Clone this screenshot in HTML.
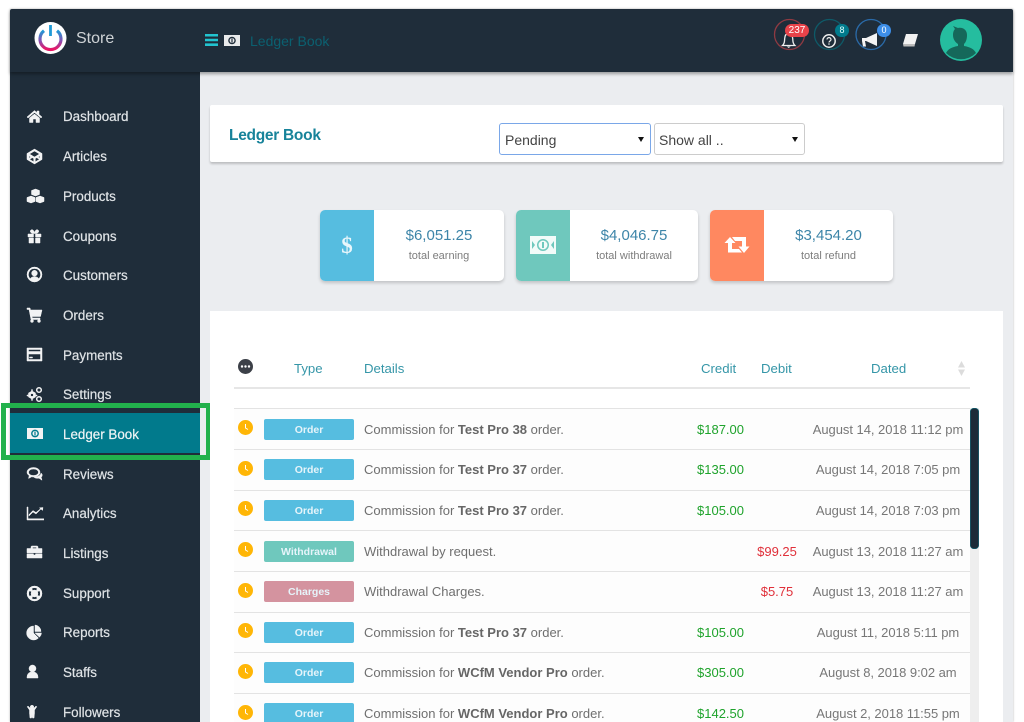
<!DOCTYPE html>
<html><head><meta charset="utf-8"><title>Ledger Book</title>
<style>
*{box-sizing:border-box}
html,body{margin:0;padding:0;width:1024px;height:722px;overflow:hidden;background:#fff;font-family:"Liberation Sans",sans-serif}
.a{position:absolute}
#root{position:relative;width:1024px;height:722px;overflow:hidden}
.nav{position:absolute;left:63px;font-size:13.4px;line-height:18px;color:#dfe3e6;-webkit-text-stroke:.2px #dfe3e6;white-space:nowrap}
.ic{position:absolute;left:26px;width:17px;height:17px;fill:#f2f3f4;stroke:#f2f3f4;stroke-width:.5}
.t{position:absolute;white-space:nowrap;font-size:13px;line-height:18px;color:#6f6f6f}
.t b{font-weight:bold;color:#666}
.h{position:absolute;top:360px;white-space:nowrap;font-size:13.2px;line-height:18px;color:#3596a8}
.badge{position:absolute;left:264px;width:90px;height:21px;border-radius:2px;color:#e6f4fa;font-size:10.5px;line-height:22px;text-align:center;font-weight:bold}
.line{position:absolute;left:234px;width:736px;height:1px;background:#e3e3e3}
.row{position:absolute;left:234px;width:736px;height:40px;background:#fdfdfd}
.clock{position:absolute;left:238px;width:15px;height:15px}
.cr{position:absolute;left:697px;font-size:13px;line-height:18px;color:#1fa32c}
.db{position:absolute;width:60px;left:747px;text-align:center;font-size:13px;line-height:18px;color:#e0303a}
.dt{position:absolute;left:790px;width:196px;text-align:center;font-size:13px;letter-spacing:-.04px;line-height:18px;color:#777;white-space:nowrap}
.card{position:absolute;top:210px;height:71px;background:#fff;border-radius:5px;box-shadow:0 2px 3px rgba(0,0,0,.18);overflow:hidden}
.card i{position:absolute;left:0;top:0;width:54px;height:71px;display:block}
.amt{position:absolute;left:54px;right:0;top:17px;text-align:center;font-size:15px;line-height:18px;color:#3d85a8}
.lbl{position:absolute;left:54px;right:0;top:38.500px;text-align:center;font-size:11px;line-height:14px;color:#7d7d7d}
.sel{position:absolute;top:123px;height:32px;background:#fff;border-radius:3px;font-size:14px;color:#444}
.sel:after{content:"";position:absolute;right:6px;top:13px;border:3.500px solid transparent;border-top:5px solid #111;border-bottom:0}
</style></head><body><div id="root">

<div class="a" style="left:10px;top:9px;width:1003px;height:713px;background:#ebedf0;box-shadow:0 0 2px rgba(0,0,0,.3)"></div>
<div class="a" style="left:10px;top:72px;width:190px;height:650px;background:#1f2d3a"></div>
<div class="a" style="left:10px;top:9px;width:1003px;height:62.500px;background:#1f2d3a;box-shadow:0 2px 3px rgba(0,0,0,.35);border-radius:2px 2px 0 0"></div>

<!-- logo -->
<svg class="a" style="left:34px;top:22px" width="34" height="34" viewBox="0 0 34 34">
<defs><linearGradient id="g" x1="0" y1="0" x2="0" y2="1"><stop offset="0" stop-color="#1f9ad6"/><stop offset=".55" stop-color="#8a4fb0"/><stop offset="1" stop-color="#ec1464"/></linearGradient></defs>
<circle cx="16.500" cy="16" r="16" fill="#fff"/>
<path d="M10 8.800A10.500 10.500 0 1 0 23 8.800" fill="none" stroke="url(#g)" stroke-width="3.200"/>
<path d="M16.500 3v11" stroke="#1f9ad6" stroke-width="2.800" fill="none"/>
</svg>
<div class="a" style="left:76px;top:28.500px;font-size:16px;line-height:20px;color:#cfd3d6">Store</div>
<svg class="a" style="left:205px;top:34px" width="13" height="12" viewBox="0 0 13 12"><path d="M0 0h13v2.500H0zM0 4.700h13v2.500H0zM0 9.400h13V12H0z" fill="#22c4d0"/></svg>
<svg class="a" style="left:224px;top:35px" width="16" height="11" viewBox="0 0 16 11"><path d="M0 0h16v11H0z" fill="#e8eaeb"/><circle cx="8" cy="5.500" r="3.800" fill="#1f2d3a"/><circle cx="8" cy="5.500" r="2.400" fill="#e8eaeb"/><path d="M7.400 3.500h1.200v4H7.400z" fill="#1f2d3a"/></svg>
<div class="a" style="left:250px;top:31.500px;font-size:14px;line-height:18px;color:#0b6070">Ledger Book</div>

<!-- header notifications -->
<svg class="a" style="left:770px;top:15px" width="125" height="40" viewBox="0 0 125 40">
<circle cx="19.500" cy="19.500" r="15" fill="none" stroke="#8f3a42" stroke-width="1.300"/>
<path d="M12.500 30.500c2-2 2-4 2.200-7 .2-3 1.500-5 4-5s3.800 2 4 5c.2 3 .2 5 2.200 7z" fill="none" stroke="#eee" stroke-width="1.300"/><path d="M16.700 31.500h4l-2 1.500z" fill="#eee"/>
<circle cx="59.500" cy="19.500" r="15" fill="none" stroke="#0e5a68" stroke-width="1.300"/>
<circle cx="59" cy="26" r="6.200" fill="none" stroke="#eee" stroke-width="1.500"/><path d="M57 24.500c0-2.500 4-2.500 4 0 0 1.500-2 1.500-2 3" fill="none" stroke="#eee" stroke-width="1.200"/><circle cx="59" cy="29" r=".8" fill="#eee"/>
<circle cx="101" cy="19.500" r="15" fill="none" stroke="#2a6aa8" stroke-width="1.300"/>
<path d="M92 23h4l11-5v13l-11-5h-1l1 5.500h-3l-1-5.500z" fill="#f4f4f4"/>
</svg>
<div class="a" style="left:785px;top:24px;width:24px;height:13px;border-radius:7px;background:#e8434a;color:#fff;font-size:10px;line-height:13px;text-align:center">237</div>
<div class="a" style="left:835px;top:24px;width:14px;height:13px;border-radius:7px;background:#017a8c;color:#dff;font-size:9px;line-height:13px;text-align:center">8</div>
<div class="a" style="left:877px;top:24px;width:14px;height:13px;border-radius:7px;background:#3d8ee8;color:#fff;font-size:9px;line-height:13px;text-align:center">0</div>
<svg class="a" style="left:903px;top:34px" width="15" height="13" viewBox="0 0 15 13"><path d="M3 0h12l-3 10H0z" fill="#f2f2f2"/><path d="M0 10h12l-.5 2.500H.5z" fill="#bbb"/></svg>
<svg class="a" style="left:940px;top:19px" width="42" height="42" viewBox="0 0 42 42">
<circle cx="21" cy="21" r="21" fill="#25bd9f"/>
<path d="M13 7l5 2c5-1 9 2 9 7 0 4-1 7-3 9v2c6 1 10 3 12 7a21 21 0 0 1-30 0c2-4 6-6 12-7v-2c-3-2-5-5-5-9 0-3 1-5 2-6z" fill="#15685a"/>
</svg>

<!-- sidebar -->
<svg class="ic" style="top:108px" viewBox="0 0 17 17"><path d="M8.500 2.500L1 9l1 1 6.500-5.500L15 10l1-1-3-2.600V3h-2v1.700zM3.500 10l5-4 5 4v4.500H10v-3.500H7v3.500H3.500z"/></svg>
<div class="nav" style="top:108px">Dashboard</div>
<svg class="ic" style="top:148px" viewBox="0 0 17 17"><path d="M8.500 1l7.500 4.500v6L8.500 16 1 11.500v-6zM8.500 3L3.500 6l5 3 5-3zM3 8v2l2-1zM14 8l-2 1 2 1zM3.500 11.300l4.200 2.500v-3.300L6.300 9.700zM13.500 11.300l-2.800-1.600-1.400.8v3.300z" fill-rule="evenodd"/></svg>
<div class="nav" style="top:148px">Articles</div>
<svg class="ic" style="top:188px;width:19px" viewBox="0 0 19 17"><path d="M9.500 1l4 1.500v4l-4 1.500-4-1.500v-4zM5 8l4 1.500v4L5 15l-4-1.500v-4zM14 8l4 1.500v4L14 15l-4-1.500v-4z"/></svg>
<div class="nav" style="top:188px">Products</div>
<svg class="ic" style="top:228px" viewBox="0 0 17 17"><path d="M2 6h5.500v3H2zM9.500 6H15v3H9.500zM3 10h4.500v5H3zM9.500 10H14v5H9.500zM5 2c1.500-1 3 .5 3.500 3 .5-2.500 2-4 3.500-3s.5 3-1.500 3.500h-4C4.500 5 3.500 3 5 2z"/></svg>
<div class="nav" style="top:228px">Coupons</div>
<svg class="ic" style="top:266px" viewBox="0 0 17 17"><path fill-rule="evenodd" d="M8.500 1a7.500 7.500 0 1 1 0 15 7.500 7.500 0 0 1 0-15zm0 1.500a6 6 0 0 0-4.300 10.200c1-1.500 2.500-2 4.300-2s3.300.5 4.300 2A6 6 0 0 0 8.500 2.500zm0 1.800a2.900 2.900 0 1 1 0 5.800 2.900 2.900 0 0 1 0-5.800z"/></svg>
<div class="nav" style="top:267px">Customers</div>
<svg class="ic" style="top:306px" viewBox="0 0 17 17"><path d="M1 2h3l.5 2H16l-1.500 6.500H6l.3 1.500H14v1.500H5L3 3.500H1z"/><circle cx="6" cy="15" r="1.500"/><circle cx="13" cy="15" r="1.500"/></svg>
<div class="nav" style="top:307px">Orders</div>
<svg class="ic" style="top:346px" viewBox="0 0 17 17"><path fill-rule="evenodd" d="M1 2h15v13H1zM2.500 3.500v2h12v-2zM2.500 8v5.500h12V8zM3.500 11h3v1h-3z"/></svg>
<div class="nav" style="top:347px">Payments</div>
<svg class="ic" style="top:386px" viewBox="0 0 17 17"><path fill-rule="evenodd" d="M6 5l3.500 2v4L6 13l-3.500-2V7l3.500-2zm0 2.500a1.500 1.500 0 1 0 0 3 1.500 1.500 0 0 0 0-3zM1 9h2v1H1zM9 9h2v1H9zM5.500 3.500h1V5h-1zM5.500 13h1v1.500h-1z"/><circle cx="13" cy="4" r="2.300" fill="none" stroke="#f2f3f4" stroke-width="1.500"/><circle cx="13" cy="13" r="2.300" fill="none" stroke="#f2f3f4" stroke-width="1.500"/></svg>
<div class="nav" style="top:386px">Settings</div>

<div class="a" style="left:10px;top:413px;width:190px;height:40px;background:#017a8c"></div>
<div class="a" style="left:1px;top:403px;width:210px;height:57px;border:5px solid #22b14c"></div>
<svg class="a" style="left:27px;top:428px" width="16" height="11" viewBox="0 0 16 11"><path d="M0 0h16v11H0z" fill="#f2f3f4"/><circle cx="8" cy="5.500" r="3.900" fill="#017a8c"/><circle cx="8" cy="5.500" r="2.500" fill="#f2f3f4"/><path d="M7.400 3.500h1.200v4H7.400z" fill="#017a8c"/></svg>
<div class="nav" style="top:426px;color:#eef4f5;-webkit-text-stroke:.2px #eef4f5">Ledger Book</div>

<svg class="ic" style="top:466px" viewBox="0 0 17 17"><path fill-rule="evenodd" d="M7.500 1.500c3.500 0 6.500 2 6.500 4.800S11 11 7.500 11c-.6 0-1.200 0-1.800-.2L2.500 12.500l.7-2.800C1.900 8.800 1 7.700 1 6.300 1 3.500 4 1.500 7.500 1.500zm0 1.500C5 3 2.600 4.400 2.600 6.300 2.600 8.200 5 9.500 7.500 9.500s4.900-1.300 4.900-3.200C12.400 4.400 10 3 7.500 3z"/><path d="M15 7c1.200.8 1.500 2 1 3.200l-.8 1 .8 3-3-2c-2 .3-3.800 0-5-1 3 0 7-1.500 7-4.200z"/></svg>
<div class="nav" style="top:466px">Reviews</div>
<svg class="ic" style="top:505px;width:18px" viewBox="0 0 18 17"><path d="M1 2h1v11.800h16V15H1z"/><path d="M3 11l4-4 3 2 5-5 1.500 1.500.5-3-3.500.3 1 1L10 7.500l-3-2-4 4z"/></svg>
<div class="nav" style="top:505px">Analytics</div>
<svg class="ic" style="top:544px" viewBox="0 0 17 17"><path fill-rule="evenodd" d="M6 2h5c.6 0 1 .4 1 1v1.500h4v4.300H1V4.500h4V3c0-.6.4-1 1-1zm.5 1.300v1.200h4V3.300zM1 9.800h6.500V11h2V9.800H16V14H1z"/></svg>
<div class="nav" style="top:545px">Listings</div>
<svg class="ic" style="top:585px" viewBox="0 0 17 17"><path fill-rule="evenodd" d="M8.500 1a7.500 7.500 0 1 1 0 15 7.500 7.500 0 0 1 0-15zM5.700 3.500l1 2.100a3.300 3.300 0 0 1 3.600 0l1-2.100a5.600 5.600 0 0 0-5.600 0zM3.500 5.700a5.600 5.600 0 0 0 0 5.600l2.100-1a3.300 3.300 0 0 1 0-3.600zM13.500 5.700l-2.100 1a3.300 3.300 0 0 1 0 3.600l2.100 1a5.600 5.600 0 0 0 0-5.600zM6.700 11.400l-1 2.100a5.600 5.600 0 0 0 5.600 0l-1-2.100a3.300 3.300 0 0 1-3.600 0z"/></svg>
<div class="nav" style="top:585px">Support</div>
<svg class="ic" style="top:624px" viewBox="0 0 17 17"><path d="M7.500 2v7l5 5A7 7 0 1 1 7.500 2z"/><path d="M9 1a6.500 6.500 0 0 1 6 6.500H9zM9 9h6.500a7 7 0 0 1-2 4.200z"/></svg>
<div class="nav" style="top:624px">Reports</div>
<svg class="ic" style="top:664px" viewBox="0 0 17 17"><circle cx="6.500" cy="4.500" r="3.500"/><path d="M1 14c0-4 1.500-6 5.500-6S12 10 12 14z"/></svg>
<div class="nav" style="top:664px">Staffs</div>
<svg class="ic" style="top:704px" viewBox="0 0 17 17"><circle cx="6" cy="3" r="1.800"/><path d="M2 2l2.500 2.500h3L10 2l.8.8L8.500 6v3.500l-.5 4.500H6.500L6 10.500 5.500 14H4l-.5-4.500V6L1.200 2.800z"/></svg>
<div class="nav" style="top:704px">Followers</div>

<!-- top card -->
<div class="a" style="left:210px;top:105px;width:793px;height:57px;background:#fff;box-shadow:0 2px 2px rgba(0,0,0,.2);border-radius:2px"></div>
<div class="a" style="left:229px;top:126px;font-size:15.500px;letter-spacing:-.28px;font-weight:bold;line-height:20px;color:#17839a">Ledger Book</div>
<div class="sel" style="left:499px;width:152px;border:1.500px solid #7aa7e8;padding-left:5px;line-height:32px">Pending</div>
<div class="sel" style="left:654px;width:151px;border:1px solid #ccc;padding-left:4px;line-height:33px">Show all ..</div>

<!-- stat cards -->
<div class="card" style="left:320px;width:184px"><i style="background:#56bde0"></i>
<div class="a" style="left:0;top:22px;width:54px;text-align:center;font-family:'Liberation Serif',serif;font-size:23px;font-weight:bold;line-height:28px;color:#e8f6fb">$</div>
<div class="amt">$6,051.25</div><div class="lbl">total earning</div></div>
<div class="card" style="left:516px;width:182px"><i style="background:#6fc8bd"></i>
<svg class="a" style="left:14px;top:26px" width="26" height="18" viewBox="0 0 26 18"><path fill-rule="evenodd" d="M0 0h26v18H0zM13 3a6 6 0 1 0 0 12 6 6 0 0 0 0-12zM2 5v8l3-4zM24 5l-3 4 3 4z" fill="#f2fbf9"/><circle cx="13" cy="9" r="4.500" fill="#f2fbf9"/><path d="M12 6h2v6h-2z" fill="#6fc8bd"/></svg>
<div class="amt">$4,046.75</div><div class="lbl">total withdrawal</div></div>
<div class="card" style="left:710px;width:183px"><i style="background:#ff8860"></i>
<svg class="a" style="left:14px;top:26px" width="26" height="20" viewBox="0 0 26 20"><path d="M6 1l5.500 6H8v6h7l3 3.500H4V7H.5zM8 1h14v9.500h3.500L20 17l-5.500-6.500H18V5h-7z" fill="#fff"/></svg>
<div class="amt">$3,454.20</div><div class="lbl">total refund</div></div>

<!-- table card -->
<div class="a" style="left:210px;top:311px;width:793px;height:411px;background:#fff"></div>
<svg class="a" style="left:238px;top:359px" width="15" height="15" viewBox="0 0 15 15"><circle cx="7.500" cy="7.500" r="7.500" fill="#3c4048"/><circle cx="4" cy="7.500" r="1.200" fill="#fff"/><circle cx="7.500" cy="7.500" r="1.200" fill="#fff"/><circle cx="11" cy="7.500" r="1.200" fill="#fff"/></svg>
<div class="h" style="left:294px">Type</div>
<div class="h" style="left:364px">Details</div>
<div class="h" style="left:701px">Credit</div>
<div class="h" style="left:761px">Debit</div>
<div class="h" style="left:871px">Dated</div>
<svg class="a" style="left:957px;top:361px" width="9" height="15" viewBox="0 0 9 15"><path d="M4.500 0L8 6.500H1zM4.500 15L1 8.500h7z" fill="#dcdcdc"/></svg>
<div class="a" style="left:234px;top:387px;width:736px;height:2px;background:#e6e6e6"></div>

<div class="row" style="top:409px"></div><div class="row" style="top:450px"></div><div class="row" style="top:491px"></div><div class="row" style="top:531px"></div><div class="row" style="top:572px"></div><div class="row" style="top:613px"></div><div class="row" style="top:653px"></div><div class="row" style="top:694px"></div>
<div class="line" style="top:408px"></div><div class="line" style="top:449px"></div><div class="line" style="top:490px"></div><div class="line" style="top:530px"></div><div class="line" style="top:571px"></div><div class="line" style="top:612px"></div><div class="line" style="top:652px"></div><div class="line" style="top:693px"></div>

<svg class="clock" style="top:420px" viewBox="0 0 15 15"><circle cx="7.500" cy="7.500" r="7.500" fill="#ffb606"/><path d="M7.500 4v4l2.500 1.500" fill="none" stroke="#fff" stroke-width="1"/></svg>
<svg class="clock" style="top:461px" viewBox="0 0 15 15"><circle cx="7.500" cy="7.500" r="7.500" fill="#ffb606"/><path d="M7.500 4v4l2.500 1.500" fill="none" stroke="#fff" stroke-width="1"/></svg>
<svg class="clock" style="top:501px" viewBox="0 0 15 15"><circle cx="7.500" cy="7.500" r="7.500" fill="#ffb606"/><path d="M7.500 4v4l2.500 1.500" fill="none" stroke="#fff" stroke-width="1"/></svg>
<svg class="clock" style="top:542px" viewBox="0 0 15 15"><circle cx="7.500" cy="7.500" r="7.500" fill="#ffb606"/><path d="M7.500 4v4l2.500 1.500" fill="none" stroke="#fff" stroke-width="1"/></svg>
<svg class="clock" style="top:583px" viewBox="0 0 15 15"><circle cx="7.500" cy="7.500" r="7.500" fill="#ffb606"/><path d="M7.500 4v4l2.500 1.500" fill="none" stroke="#fff" stroke-width="1"/></svg>
<svg class="clock" style="top:623px" viewBox="0 0 15 15"><circle cx="7.500" cy="7.500" r="7.500" fill="#ffb606"/><path d="M7.500 4v4l2.500 1.500" fill="none" stroke="#fff" stroke-width="1"/></svg>
<svg class="clock" style="top:664px" viewBox="0 0 15 15"><circle cx="7.500" cy="7.500" r="7.500" fill="#ffb606"/><path d="M7.500 4v4l2.500 1.500" fill="none" stroke="#fff" stroke-width="1"/></svg>
<svg class="clock" style="top:705px" viewBox="0 0 15 15"><circle cx="7.500" cy="7.500" r="7.500" fill="#ffb606"/><path d="M7.500 4v4l2.500 1.500" fill="none" stroke="#fff" stroke-width="1"/></svg>

<div class="badge" style="top:419px;background:#56bde0">Order</div>
<div class="badge" style="top:459px;background:#56bde0">Order</div>
<div class="badge" style="top:500px;background:#56bde0">Order</div>
<div class="badge" style="top:541px;background:#6fc8bd">Withdrawal</div>
<div class="badge" style="top:581px;background:#d4939f">Charges</div>
<div class="badge" style="top:622px;background:#56bde0">Order</div>
<div class="badge" style="top:662px;background:#56bde0">Order</div>
<div class="badge" style="top:703px;background:#56bde0">Order</div>

<div class="t" style="left:364px;top:421px">Commission for <b>Test Pro 38</b> order.</div>
<div class="t" style="left:364px;top:461px">Commission for <b>Test Pro 37</b> order.</div>
<div class="t" style="left:364px;top:502px">Commission for <b>Test Pro 37</b> order.</div>
<div class="t" style="left:364px;top:543px">Withdrawal by request.</div>
<div class="t" style="left:364px;top:583px">Withdrawal Charges.</div>
<div class="t" style="left:364px;top:624px">Commission for <b>Test Pro 37</b> order.</div>
<div class="t" style="left:364px;top:664px">Commission for <b>WCfM Vendor Pro</b> order.</div>
<div class="t" style="left:364px;top:705px">Commission for <b>WCfM Vendor Pro</b> order.</div>

<div class="cr" style="top:421px">$187.00</div>
<div class="cr" style="top:461px">$135.00</div>
<div class="cr" style="top:502px">$105.00</div>
<div class="db" style="top:543px">$99.25</div>
<div class="db" style="top:583px">$5.75</div>
<div class="cr" style="top:624px">$105.00</div>
<div class="cr" style="top:664px">$305.00</div>
<div class="cr" style="top:705px">$142.50</div>

<div class="dt" style="top:421px">August 14, 2018 11:12 pm</div>
<div class="dt" style="top:461px">August 14, 2018 7:05 pm</div>
<div class="dt" style="top:502px">August 14, 2018 7:03 pm</div>
<div class="dt" style="top:543px">August 13, 2018 11:27 am</div>
<div class="dt" style="top:583px">August 13, 2018 11:27 am</div>
<div class="dt" style="top:624px">August 11, 2018 5:11 pm</div>
<div class="dt" style="top:664px">August 8, 2018 9:02 am</div>
<div class="dt" style="top:705px">August 2, 2018 11:55 pm</div>

<!-- scrollbar -->
<div class="a" style="left:970px;top:408px;width:9px;height:314px;background:#eeeeee"></div>
<div class="a" style="left:970px;top:408px;width:9px;height:141px;border-radius:4px;background:#1c2b38;box-shadow:inset 0 0 0 .5px #0f7788"></div>

</div></body></html>
